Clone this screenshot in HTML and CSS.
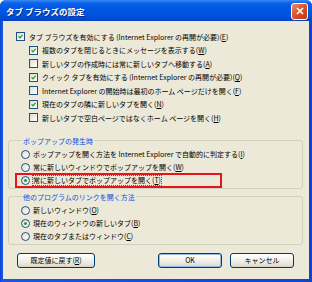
FILE: index.html
```html
<!DOCTYPE html>
<html lang="ja">
<head>
  <meta charset="UTF-8">
  <meta name="viewport" content="width=device-width, initial-scale=1.0">
  <title>タブ ブラウズの設定</title>
  <link rel="stylesheet" href="styles.css">
</head>
<body>
  <div class="window">
    <div class="titlebar">
      <span class="title">タブ ブラウズの設定</span>
      <span class="close-btn">
        <svg width="8" height="8" viewBox="0 0 8 8"><path d="M1 1 L7 7 M7 1 L1 7" stroke="#fff" stroke-width="1.6"/></svg>
      </span>
    </div>

    <div class="client">
      <div class="option first">
        <span class="check"><svg viewBox="0 0 9 9"><path d="M2 4.3 L3.8 6.2 L7.2 2.4" class="tick"/></svg></span>
        <span>タブ ブラウズを有効にする (Internet Explorer の再開が必要)(<u>E</u>)</span>
      </div>

      <div class="sub-options">
        <div class="option">
          <span class="check"><svg viewBox="0 0 9 9"><path d="M2 4.3 L3.8 6.2 L7.2 2.4" class="tick"/></svg></span>
          <span>複数のタブを閉じるときにメッセージを表示する(<u>W</u>)</span>
        </div>
        <div class="option">
          <span class="check"></span>
          <span>新しいタブの作成時には常に新しいタブへ移動する(<u>A</u>)</span>
        </div>
        <div class="option">
          <span class="check"><svg viewBox="0 0 9 9"><path d="M2 4.3 L3.8 6.2 L7.2 2.4" class="tick"/></svg></span>
          <span>クイック タブを有効にする (Internet Explorer の再開が必要)(<u>Q</u>)</span>
        </div>
        <div class="option">
          <span class="check"></span>
          <span>Internet Explorer の開始時は最初のホーム ページだけを開く(<u>F</u>)</span>
        </div>
        <div class="option">
          <span class="check"><svg viewBox="0 0 9 9"><path d="M2 4.3 L3.8 6.2 L7.2 2.4" class="tick"/></svg></span>
          <span>現在のタブの隣に新しいタブを開く(<u>N</u>)</span>
        </div>
        <div class="option">
          <span class="check"></span>
          <span>新しいタブで空白ページではなくホーム ページを開く(<u>H</u>)</span>
        </div>
      </div>

      <fieldset class="group">
        <legend>ポップアップの発生時</legend>
        <div class="radio-row">
          <span class="radio"></span>
          <span>ポップアップを開く方法を Internet Explorer で自動的に判定する(<u>I</u>)</span>
        </div>
        <div class="radio-row">
          <span class="radio"></span>
          <span>常に新しいウィンドウでポップアップを開く(<u>W</u>)</span>
        </div>
        <div class="radio-row highlight">
          <span class="radio on"></span>
          <span class="focused">常に新しいタブでポップアップを開く(<u>T</u>)</span>
        </div>
      </fieldset>

      <fieldset class="group second">
        <legend>他のプログラムのリンクを開く方法</legend>
        <div class="radio-row">
          <span class="radio"></span>
          <span>新しいウィンドウ(<u>O</u>)</span>
        </div>
        <div class="radio-row">
          <span class="radio on"></span>
          <span>現在のウィンドウの新しいタブ(<u>B</u>)</span>
        </div>
        <div class="radio-row">
          <span class="radio"></span>
          <span>現在のタブまたはウィンドウ(<u>C</u>)</span>
        </div>
      </fieldset>

      <div class="buttons">
        <button class="btn reset">既定値に戻す(<u>R</u>)</button>
        <div class="spacer"></div>
        <button class="btn default">OK</button>
        <button class="btn">キャンセル</button>
      </div>
    </div>
  </div>
</body>
</html>
```

FILE: styles.css
```css
body {
  margin: 0;
  padding: 0;
  font-family: "Noto Sans CJK JP", "Noto Sans", sans-serif;
  font-size: 7px;
  color: #000;
}

.window {
  width: 312px;
  height: 282px;
  display: flex;
  flex-direction: column;
  background: linear-gradient(to right, #0a3fd0, #1657e6 2px, #0a45d8);
  border-radius: 6px 6px 0 0;
  overflow: hidden;
}

.titlebar {
  height: 21px;
  flex-shrink: 0;
  display: flex;
  align-items: center;
  justify-content: space-between;
  padding: 0 4px 0 6px;
  background: linear-gradient(to bottom, #3b8cf5 0, #0b63e8 3px, #0057e6 8px, #0054e0 14px, #004ad0 19px, #0a40bd 21px);
}

.title {
  color: #fff;
  font-weight: bold;
  font-size: 8.5px;
  text-shadow: 1px 1px 0 #0a2d8c;
}

.close-btn {
  width: 15px;
  height: 15px;
  margin-top: 1px;
  border: 1px solid #fff;
  border-radius: 3px;
  background: linear-gradient(135deg, #f08a66, #d8532a 50%, #c0380e);
  display: flex;
  align-items: center;
  justify-content: center;
}

.client {
  flex: 1;
  margin: 0 3px 3px 3px;
  padding: 9px 6px 0 5px;
  background: #ece9d8;
  display: flex;
  flex-direction: column;
}

.option {
  display: flex;
  align-items: center;
  height: 13.5px;
  gap: 4px;
  white-space: nowrap;
}

.option.first {
  margin-left: 8px;
}

.sub-options {
  margin-left: 21px;
}

.check {
  width: 9px;
  height: 9px;
  box-sizing: border-box;
  border: 1px solid #1c5180;
  background: linear-gradient(135deg, #dcdcd5, #fff);
  flex-shrink: 0;
}

.check svg {
  display: block;
  width: 7px;
  height: 7px;
}

.tick {
  fill: none;
  stroke: #21a121;
  stroke-width: 1.7;
}

.group {
  margin: 10px 0 0 0;
  padding: 1px 0 1px 7px;
  border: 1px solid #d0d0bf;
  border-radius: 3px;
}

.group.second {
  margin-top: 2px;
}

.group legend {
  color: #0a50e0;
  padding: 0 1px;
  margin-left: 6px;
  height: 12px;
  line-height: 12px;
}

.radio-row {
  display: flex;
  align-items: center;
  gap: 3px;
  width: 205px;
  height: 13px;
  box-sizing: border-box;
  padding-left: 5px;
  white-space: nowrap;
}

.radio-row.highlight {
  outline: 2px solid #e8141c;
  outline-offset: -1px;
}

.focused {
  outline: 1px dotted #555;
  line-height: 9px;
}

.radio {
  width: 9px;
  height: 9px;
  box-sizing: border-box;
  border: 1px solid #1c5180;
  border-radius: 50%;
  background: linear-gradient(135deg, #dcdcd5, #fff);
  flex-shrink: 0;
  display: flex;
  align-items: center;
  justify-content: center;
}

.radio.on::after {
  content: "";
  width: 3px;
  height: 3px;
  border-radius: 50%;
  background: #21a121;
}

.buttons {
  display: flex;
  align-items: center;
  gap: 8px;
  margin-top: 8px;
  padding: 0 9px 0 9px;
}

.spacer {
  flex: 1;
}

.btn {
  height: 15px;
  width: 64px;
  padding: 0;
  font-family: inherit;
  font-size: 7px;
  color: #000;
  border: 1px solid #003c74;
  border-radius: 3px;
  background: linear-gradient(to bottom, #fff, #f4f3ee 40%, #e6e3d8 80%, #d6d0c5);
}

.btn.reset {
  width: 78px;
}

.btn.default {
  box-shadow: inset 0 0 0 1px #98b8ea;
}
```
